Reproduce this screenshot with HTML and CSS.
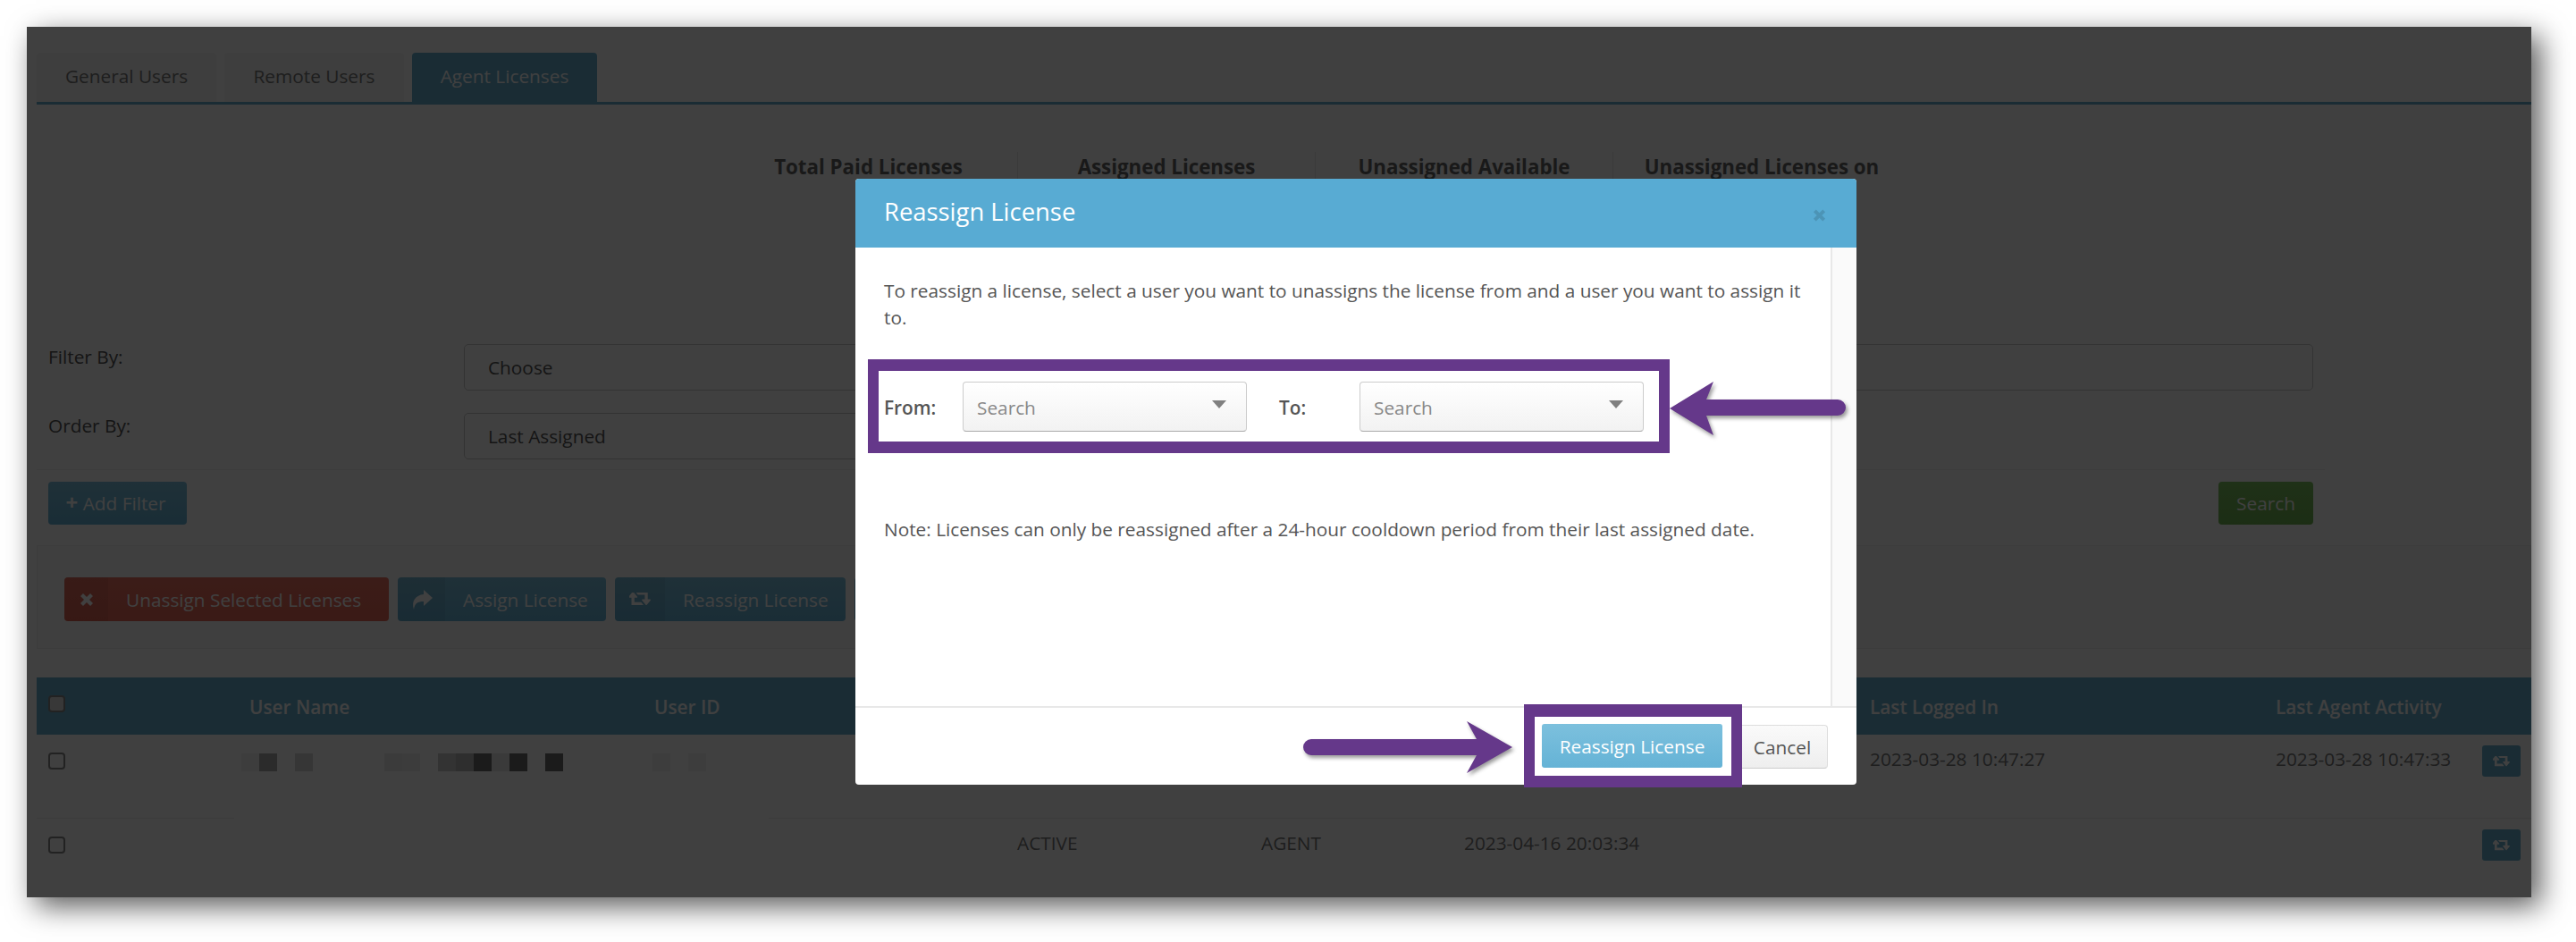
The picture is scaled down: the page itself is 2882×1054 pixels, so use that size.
FILE: index.html
```html
<!doctype html>
<html lang="en">
    <head>
        <meta charset="UTF-8" />
        <meta name="viewport" content="width=device-width, initial-scale=1.0" />
        <title>Agent Licenses</title>
        <link rel="stylesheet" href="styles.css">
    </head>
    <body>
        <svg class="icon-defs" width="0" height="0">
            <symbol id="i-times" viewBox="0 0 16 16"><path d="M4 1 8 5l4-4 3 3-4 4 4 4-3 3-4-4-4 4-3-3 4-4-4-4z" /></symbol>
            <symbol id="i-share" viewBox="0 0 24 24"><path d="M14 1l10 9-10 9v-5c-7 0-10 2-11 9C0 13 5 7 14 6z" /></symbol>
            <symbol id="i-retweet" viewBox="0 384 1856 1024"><path d="M1216 1376q0 13-9.5 22.5t-22.5 9.5h-960q-8 0-13.5-2t-9-7-5.5-8-3-11.5-1-11.5v-600h-192q-26 0-45-19t-19-45q0-24 15-41l320-384q19-22 49-22t49 22l320 384q15 17 15 41 0 26-19 45t-45 19h-192v384h576q16 0 25 11l160 192q7 10 7 21zm640-416q0 24-15 41l-320 384q-20 23-49 23t-49-23l-320-384q-15-17-15-41 0-26 19-45t45-19h192v-384h-576q-16 0-25-12l-160-192q-7-9-7-20 0-13 9.5-22.5t22.5-9.5h960q8 0 13.5 2t9 7 5.5 8 3 11.5 1 11.5v600h192q26 0 45 19t19 45z" /></symbol>
        </svg>

        <div class="window">
            <ul class="tabs">
                <li class="tab">General Users</li>
                <li class="tab">Remote Users</li>
                <li class="tab active">Agent Licenses</li>
            </ul>

            <div class="stats">
                <div class="stat">Total Paid Licenses</div>
                <div class="stat">Assigned Licenses</div>
                <div class="stat">Unassigned Available</div>
                <div class="stat">Unassigned Licenses on</div>
            </div>

            <div class="filters">
                <label class="filter-label">Filter By:</label>
                <div class="field">Choose</div>
                <div class="field"></div>
                <label class="filter-label">Order By:</label>
                <div class="field">Last Assigned</div>
            </div>
            <div class="filter-actions">
                <button class="btn btn-info"><span class="plus">+</span> Add Filter</button>
                <button class="btn btn-green">Search</button>
            </div>

            <div class="action-panel">
                <button class="btn-icon btn-red">
                    <span class="btn-icon-box box-red"><svg class="ico-times"><use href="#i-times" /></svg></span>
                    <span class="btn-icon-text">Unassign Selected Licenses</span>
                </button>
                <button class="btn-icon btn-assign">
                    <span class="btn-icon-box box-assign"><svg class="ico-share"><use href="#i-share" /></svg></span>
                    <span class="btn-icon-text">Assign License</span>
                </button>
                <button class="btn-icon btn-reassign-all">
                    <span class="btn-icon-box box-reassign"><svg class="ico-retweet"><use href="#i-retweet" /></svg></span>
                    <span class="btn-icon-text">Reassign License</span>
                </button>
                <button class="btn-icon btn-hidden"></button>
            </div>

            <div class="table">
                <div class="thead">
                    <div class="cell cell-check"><span class="checkbox filled"></span></div>
                    <div class="cell">User Name</div>
                    <div class="cell">User ID</div>
                    <div class="cell"></div>
                    <div class="cell"></div>
                    <div class="cell"></div>
                    <div class="cell"></div>
                    <div class="cell">Last Logged In</div>
                    <div class="cell">Last Agent Activity</div>
                </div>
                <div class="row first-row">
                    <div class="cell cell-check"><span class="checkbox"></span></div>
                    <div class="cell cell-blur">
                        <span class="px s1"></span><span class="px s2"></span><span class="px"></span><span class="px s3"></span>
                        <span class="px"></span><span class="px"></span><span class="px"></span><span class="px"></span>
                        <span class="px s4"></span><span class="px s5"></span><span class="px"></span><span class="px s6"></span>
                        <span class="px s7"></span><span class="px s8"></span><span class="px s9"></span><span class="px s8"></span>
                        <span class="px"></span><span class="px s8"></span>
                    </div>
                    <div class="cell cell-blur cell-id">
                        <span class="px s1"></span><span class="px"></span><span class="px s1"></span>
                    </div>
                    <div class="cell"></div>
                    <div class="cell"></div>
                    <div class="cell"></div>
                    <div class="cell"></div>
                    <div class="cell">2023-03-28 10:47:27</div>
                    <div class="cell">2023-03-28 10:47:33</div>
                    <button class="row-btn"><svg class="ico-row"><use href="#i-retweet" /></svg></button>
                </div>
                <div class="row">
                    <div class="cell cell-check"><span class="checkbox"></span></div>
                    <div class="cell"></div>
                    <div class="cell"></div>
                    <div class="cell"></div>
                    <div class="cell">ACTIVE</div>
                    <div class="cell">AGENT</div>
                    <div class="cell">2023-04-16 20:03:34</div>
                    <div class="cell"></div>
                    <div class="cell"></div>
                    <button class="row-btn"><svg class="ico-row"><use href="#i-retweet" /></svg></button>
                </div>
            </div>

            <div class="backdrop"></div>

            <!-- Modal -->
            <div class="modal">
                <div class="modal-header">
                    <span class="modal-title">Reassign License</span>
                    <svg class="modal-close"><use href="#i-times" /></svg>
                </div>
                <div class="modal-middle">
                    <div class="modal-body">
                        <p class="modal-intro">To reassign a license, select a user you want to unassigns the license from and a user you want to assign it to.</p>
                        <div class="from-to">
                            <label class="pick-label">From:</label>
                            <div class="select"><span>Search</span><i class="caret"></i></div>
                            <label class="pick-label pick-to">To:</label>
                            <div class="select"><span>Search</span><i class="caret"></i></div>
                        </div>
                        <p class="modal-note">Note: Licenses can only be reassigned after a 24-hour cooldown period from their last assigned date.</p>
                    </div>
                    <div class="scroll-track"></div>
                </div>
                <div class="modal-footer">
                    <button class="btn-cancel">Cancel</button>
                </div>

                <!-- annotazioni viola -->
                <div class="highlight">
                    <button class="btn-reassign">Reassign License</button>
                </div>
                <svg class="arrow arrow-left" width="197" height="60" viewBox="0 0 197 60">
                    <path d="M0 30 49 0 41 20H188a9 9 0 0 1 0 18H41L49 60z" />
                </svg>
                <svg class="arrow arrow-right" width="234" height="58" viewBox="0 0 234 58">
                    <path d="M234 29 183 58 194 38H9a9 9 0 0 1 0-18H194L183 0z" />
                </svg>
            </div>
        </div>
    </body>
</html>
```

FILE: styles.css
```css
* {
    box-sizing: border-box;
}
html,
body {
    height: 100%;
}
body {
    margin: 0;
    font-family: "Open Sans", sans-serif;
    font-size: 20.8px;
    line-height: 30px;
    color: #555;
    background-color: #fff;
    overflow: hidden;
}
.icon-defs {
    position: absolute;
}
button {
    font-family: inherit;
    font-size: 20.8px;
    border: none;
    padding: 0;
    color: #fff;
}
.window {
    position: relative;
    margin: 30px 0 0 30px;
    width: 2802px;
    height: 974px;
    background-color: #fff;
    padding-top: 29px;
    box-shadow: 10px 10px 30px rgba(0, 0, 0, 0.65);
    overflow: visible;
}

/* Tabs */
.tabs {
    display: flex;
    gap: 9px;
    list-style: none;
    margin: 0 0 0 11px;
    padding: 0;
    height: 58px;
    border-bottom: 3px solid #68b0d0;
}
.tab {
    height: 55px;
    width: 201px;
    line-height: 52px;
    text-align: center;
    background-color: #f7f7f7;
    border-radius: 4px 4px 0 0;
    color: #777;
}
.tab.active {
    width: 207px;
    height: 58px;
    background-color: #68b0d0;
    color: #fff;
}

/* Riepilogo licenze */
.stats {
    display: grid;
    grid-template-columns: repeat(4, 333px);
    margin: 53px 0 0 775px;
    height: 215px;
}
.stat {
    padding-top: 2px;
    text-align: center;
    font-size: 22.3px;
    font-weight: 700;
    color: #666;
    height: 60px;
    border-left: 1px solid #e8e8e8;
}
.stat:first-child {
    border-left: none;
}

/* Filtri */
.filters {
    display: grid;
    grid-template-columns: 478px 1000px 1069px;
    grid-auto-rows: 52px;
    align-content: start;
    row-gap: 25px;
    margin-left: 11px;
    height: 141px;
    border-bottom: 1px solid #eee;
    width: 2560px;
}
.filter-label {
    margin-top: -1px;
    padding-left: 13px;
}
.field {
    padding: 0 26px;
    line-height: 50px;
    border: 1px solid #ccc;
    border-radius: 5px;
}
.filters .filter-label:nth-child(4) {
    grid-column: 1;
}
.filter-actions {
    display: flex;
    justify-content: space-between;
    margin: 13px 0 0 24px;
    width: 2534px;
}
.btn {
    height: 48px;
    border-radius: 4px;
}
.btn-info {
    width: 155px;
    padding-right: 4px;
    background: linear-gradient(#7cc0dd, #65b3d6);
}
.plus {
    font-size: 24px;
    font-weight: 700;
    line-height: 20px;
}
.btn-green {
    width: 106px;
    background: linear-gradient(#7dc25f, #6fb552);
}

/* Pannello azioni */
.action-panel {
    display: flex;
    gap: 10px;
    margin: 23px 0 0 11px;
    padding: 35px 0 0 30px;
    height: 116px;
    background-color: #fcfcfc;
    border: 1px solid #f0f0f0;
}
.btn-icon {
    display: flex;
    height: 49px;
    border-radius: 4px;
    background: linear-gradient(#7cc0dd, #68b4d7);
    overflow: hidden;
}
.btn-red {
    width: 363px;
    background: linear-gradient(#ea7160, #e76857);
}
.btn-assign {
    width: 233px;
}
.btn-reassign-all {
    width: 258px;
}
.btn-hidden {
    width: 60px;
}
.btn-icon-box {
    display: flex;
    align-items: center;
    justify-content: center;
    height: 100%;
    flex-shrink: 0;
    background-color: rgba(0, 0, 0, 0.05);
}
.box-red {
    width: 49px;
}
.box-assign {
    width: 53px;
}
.box-reassign {
    width: 56px;
}
.btn-icon-text {
    line-height: 50px;
    padding-left: 20px;
    white-space: nowrap;
}
.btn-icon svg {
    fill: #fff;
}
.ico-times {
    width: 16px;
    height: 16px;
}
.ico-share {
    width: 24px;
    height: 24px;
}
.ico-retweet {
    width: 24px;
    height: 15px;
}

/* Tabella */
.table {
    margin: 32px 0 0 11px;
}
.thead,
.row {
    display: grid;
    grid-template-columns: 221px 453px 145px 261px 273px 227px 454px 454px 1fr;
    position: relative;
}
.thead {
    height: 64px;
    background-color: #68b0d0;
    color: #fff;
    font-weight: 600;
}
.thead .cell {
    padding: 18px 17px 0;
}
.row {
    height: 87px;
    color: #777;
}
.first-row {
    height: 94px;
}
.first-row .cell {
    border-bottom: 1px solid #eee;
}
.first-row .cell-blur {
    border-bottom: none;
}
.row .cell {
    padding: 12px 17px 0;
}
.thead .cell-check,
.row .cell-check {
    padding: 20px 0 0 13px;
}
.checkbox {
    display: block;
    width: 19px;
    height: 19px;
    border: 2px solid #888;
    border-radius: 4px;
    background-color: #fff;
}
.checkbox.filled {
    background-color: #ddd;
}
.row .cell-blur {
    display: flex;
    padding: 21px 0 0 8px;
}
.row .cell-id {
    padding-left: 15px;
}
.px {
    display: block;
    width: 20px;
    height: 20px;
}
.s1 { background-color: #f4f4f4; }
.s2 { background-color: #acacac; }
.s3 { background-color: #d8d8d8; }
.s4 { background-color: #ececec; }
.s5 { background-color: #f0f0f0; }
.s6 { background-color: #cccccc; }
.s7 { background-color: #b8b8b8; }
.s8 { background-color: #6c6c6c; }
.s9 { background-color: #e8e8e8; }
.row-btn {
    position: absolute;
    right: 12px;
    top: 12px;
    width: 43px;
    height: 35px;
    border-radius: 3px;
    background-color: #68b0d0;
    display: flex;
    align-items: center;
    justify-content: center;
}
.ico-row {
    width: 19px;
    height: 12px;
    fill: #fff;
}

/* Modal */
.backdrop {
    position: absolute;
    inset: 0;
    background-color: rgba(0, 0, 0, 0.75);
}
.modal {
    position: absolute;
    left: 927px;
    top: 170px;
    width: 1120px;
    height: 678px;
    display: flex;
    flex-direction: column;
    background-color: #fff;
    border-radius: 4px;
}
.modal-header {
    display: flex;
    align-items: center;
    justify-content: space-between;
    height: 77px;
    padding: 0 34px 3px 32px;
    background-color: #58abd3;
    border-radius: 4px 4px 0 0;
    flex-shrink: 0;
}
.modal-title {
    font-size: 27.4px;
    color: #fff;
}
.modal-close {
    width: 15px;
    height: 16px;
    margin-top: 8px;
    fill: #4c94b6;
}
.modal-middle {
    display: flex;
    flex: 1;
    min-height: 0;
}
.modal-body {
    flex: 1;
    padding-top: 33px;
}
.modal-intro {
    margin: 0 0 32px 32px;
    width: 1040px;
}
.scroll-track {
    width: 29px;
    background-color: #fafafa;
    border-left: 2px solid #e8e8e8;
}
.from-to {
    display: flex;
    align-items: center;
    margin-left: 14px;
    width: 897px;
    height: 105px;
    padding-left: 6px;
    border: solid #65388a;
    border-width: 13px 12px;
}
.pick-label {
    width: 88px;
    flex-shrink: 0;
    padding-top: 2px;
    font-weight: 600;
}
.pick-to {
    width: 90px;
    margin-left: 36px;
}
.select {
    display: flex;
    align-items: center;
    justify-content: space-between;
    width: 318px;
    height: 56px;
    padding: 2px 22px 0 15px;
    color: #888;
    background: linear-gradient(#fff, #f2f2f2);
    border: 1px solid #ccc;
    border-bottom-color: #aaa;
    border-radius: 4px;
}
.caret {
    display: block;
    width: 0;
    height: 0;
    border-left: 8px solid transparent;
    border-right: 8px solid transparent;
    border-top: 9px solid #808080;
    margin-top: -6px;
}
.modal-note {
    margin: 70px 0 0 32px;
}
.modal-footer {
    display: flex;
    justify-content: flex-end;
    height: 88px;
    padding: 19px 32px 0 0;
    border-top: 2px solid #e8e8e8;
    flex-shrink: 0;
}
.btn-cancel {
    width: 110px;
    height: 49px;
    padding-left: 8px;
    color: #555;
    background: linear-gradient(#fafafa, #eee);
    border: 1px solid #ddd;
    border-bottom-color: #ccc;
    border-radius: 4px;
}

/* Annotazioni */
.highlight {
    position: absolute;
    left: 748px;
    top: 588px;
    width: 244px;
    height: 93px;
    padding-top: 8px;
    padding-left: 8px;
    background-color: #fff;
    border: solid #65388a;
    border-width: 14px 12px 13px;
}
.btn-reassign {
    display: block;
    width: 202px;
    height: 49px;
    border-radius: 3px;
    background: linear-gradient(#7cc0dd, #65b3d6);
}
.arrow {
    position: absolute;
    fill: #65388a;
    filter: drop-shadow(2px 3px 2px rgba(0, 0, 0, 0.4));
}
.arrow-left {
    left: 911px;
    top: 227px;
}
.arrow-right {
    left: 501px;
    top: 607px;
}
```
